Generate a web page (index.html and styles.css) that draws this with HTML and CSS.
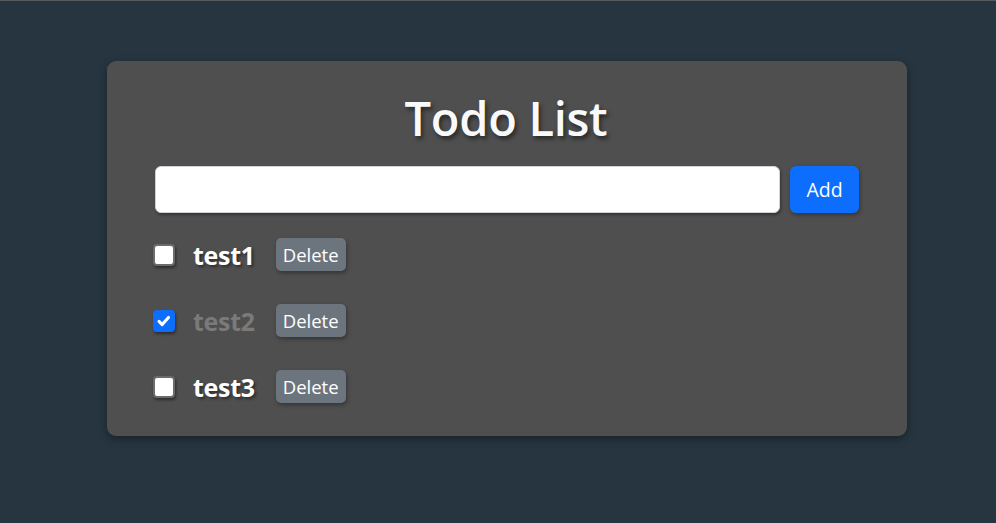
FILE: index.html
```html
<!DOCTYPE html>
<html lang="en">
<head>
<meta charset="utf-8">
<title>Todo List</title>
<link rel="stylesheet" href="styles.css">
</head>
<body>
<main class="page">
  <section class="card">
    <h1 class="title">Todo List</h1>
    <form class="add-form" onsubmit="return false">
      <input class="add-input" type="text" aria-label="New todo">
      <button class="btn btn-add" type="submit">Add</button>
    </form>
    <ul class="todo-list">
      <li class="todo">
        <input class="check" type="checkbox">
        <span class="todo-text">test1</span>
        <button class="btn btn-delete" type="button">Delete</button>
      </li>
      <li class="todo done">
        <input class="check" type="checkbox" checked>
        <span class="todo-text">test2</span>
        <button class="btn btn-delete" type="button">Delete</button>
      </li>
      <li class="todo">
        <input class="check" type="checkbox">
        <span class="todo-text">test3</span>
        <button class="btn btn-delete" type="button">Delete</button>
      </li>
    </ul>
  </section>
</main>
</body>
</html>
```
FILE: styles.css
```css
* { box-sizing: border-box; }
html, body { height: 100%; }
body {
  margin: 0;
  background: #263540;
  border-top: 1px solid #555a5e;
  font-family: "Open Sans", "Noto Sans", sans-serif;
  color: #fff;
}
.page {
  display: flex;
  justify-content: center;
  padding-top: 60px;
  padding-left: 18px;
}
.card {
  width: 800px;
  background: #4f4f4f;
  border-radius: 9px;
  box-shadow: 0 3px 8px rgba(0,0,0,0.35);
  padding: 29px 48px 33px 46px;
}
.title {
  margin: 0 0 20px;
  text-align: center;
  font-size: 47px;
  font-weight: 600;
  line-height: 1.2;
  color: #f8f9fa;
  text-shadow: 2px 3px 4px rgba(0,0,0,0.5);
  letter-spacing: -0.3px;
}
.add-form {
  display: flex;
  gap: 10px;
  padding-left: 2px;
  margin: 0 0 25px;
}
.add-input {
  flex: 1;
  height: 47px;
  border: 1px solid #ced4da;
  border-radius: 6px;
  background: #fff;
  box-shadow: 1px 2px 3px rgba(0,0,0,0.35);
  font: inherit;
  font-size: 20px;
  padding: 0 14px;
}
.btn {
  border: none;
  color: #fff;
  font-family: inherit;
  cursor: pointer;
  box-shadow: 1px 2px 4px rgba(0,0,0,0.35);
}
.btn-add {
  width: 69px;
  height: 47px;
  background: #0d6efd;
  border-radius: 6px;
  font-size: 19.5px;
}
.todo-list {
  list-style: none;
  margin: 0;
  padding: 0;
  display: flex;
  flex-direction: column;
  gap: 33px;
}
.todo {
  display: flex;
  align-items: center;
  height: 33px;
}
.check {
  appearance: none;
  -webkit-appearance: none;
  margin: 0 18px 0 0;
  width: 22px;
  height: 22px;
  border: 2px solid #6b6b6b;
  border-radius: 4px;
  background: #fff;
  box-shadow: 1px 2px 3px rgba(0,0,0,0.45);
}
.check:checked {
  background: #0d6efd url("data:image/svg+xml,%3Csvg xmlns='http://www.w3.org/2000/svg' viewBox='0 0 20 20'%3E%3Cpath fill='none' stroke='%23fff' stroke-linecap='round' stroke-linejoin='round' stroke-width='3.4' d='M4.5 10.5l3.5 3.5 7-8'/%3E%3C/svg%3E") center/100% no-repeat;
  border-color: #0d6efd;
}
.todo-text {
  font-size: 25px;
  font-weight: 700;
  color: #fff;
  text-shadow: 2px 2px 3px rgba(0,0,0,0.45);
  margin-right: 21px;
  letter-spacing: -0.3px;
}
.done .todo-text {
  color: #7a7a7a;
  text-shadow: none;
}
.btn-delete {
  height: 33px;
  padding: 0 7px;
  background: #6c757d;
  border-radius: 5px;
  font-size: 18.5px;
}
```
